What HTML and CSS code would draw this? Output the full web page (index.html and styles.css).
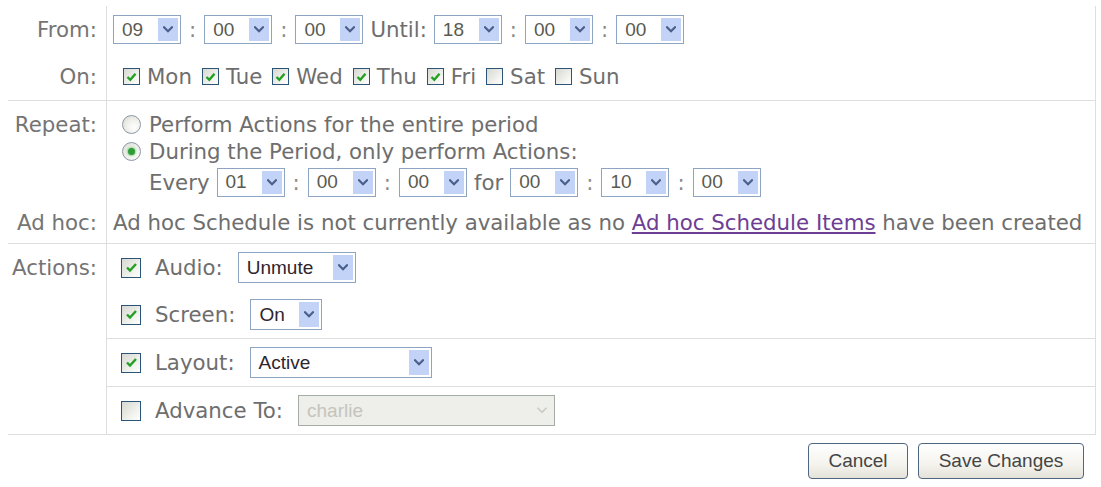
FILE: index.html
```html
<!DOCTYPE html>
<html lang="en">
<head>
<meta charset="utf-8">
<title>Schedule Item</title>
<link rel="stylesheet" href="styles.css">
</head>
<body>
<div class="panel">

  <div class="sec">
    <div class="lbl row-h">From:</div>
    <div class="cell row-h pad-sel">
      <span class="sel tm"><span class="v">09</span><span class="arr"><svg width="10" height="7" viewBox="0 0 10 7"><path d="M1 1.3 L5 5.3 L9 1.3" /></svg></span></span>
      <span class="colon">:</span>
      <span class="sel tm"><span class="v">00</span><span class="arr"><svg width="10" height="7" viewBox="0 0 10 7"><path d="M1 1.3 L5 5.3 L9 1.3" /></svg></span></span>
      <span class="colon">:</span>
      <span class="sel tm"><span class="v">00</span><span class="arr"><svg width="10" height="7" viewBox="0 0 10 7"><path d="M1 1.3 L5 5.3 L9 1.3" /></svg></span></span>
      <span class="word">Until:</span>
      <span class="sel tm"><span class="v">18</span><span class="arr"><svg width="10" height="7" viewBox="0 0 10 7"><path d="M1 1.3 L5 5.3 L9 1.3" /></svg></span></span>
      <span class="colon">:</span>
      <span class="sel tm"><span class="v">00</span><span class="arr"><svg width="10" height="7" viewBox="0 0 10 7"><path d="M1 1.3 L5 5.3 L9 1.3" /></svg></span></span>
      <span class="colon">:</span>
      <span class="sel tm"><span class="v">00</span><span class="arr"><svg width="10" height="7" viewBox="0 0 10 7"><path d="M1 1.3 L5 5.3 L9 1.3" /></svg></span></span>
    </div>

    <div class="lbl row-h">On:</div>
    <div class="cell row-h days">
      <label class="day"><span class="cb on"><svg width="11" height="10" viewBox="0 0 11 10"><path d="M1.5 5 L4.3 7.8 L9.5 1.8" /></svg></span>Mon</label>
      <label class="day"><span class="cb on"><svg width="11" height="10" viewBox="0 0 11 10"><path d="M1.5 5 L4.3 7.8 L9.5 1.8" /></svg></span>Tue</label>
      <label class="day"><span class="cb on"><svg width="11" height="10" viewBox="0 0 11 10"><path d="M1.5 5 L4.3 7.8 L9.5 1.8" /></svg></span>Wed</label>
      <label class="day"><span class="cb on"><svg width="11" height="10" viewBox="0 0 11 10"><path d="M1.5 5 L4.3 7.8 L9.5 1.8" /></svg></span>Thu</label>
      <label class="day"><span class="cb on"><svg width="11" height="10" viewBox="0 0 11 10"><path d="M1.5 5 L4.3 7.8 L9.5 1.8" /></svg></span>Fri</label>
      <label class="day"><span class="cb"></span>Sat</label>
      <label class="day"><span class="cb"></span>Sun</label>
    </div>
  </div>

  <div class="sec">
    <div class="lbl lbl-top">Repeat:</div>
    <div class="cell repeat">
      <div class="opt"><span class="radio"></span>Perform Actions for the entire period</div>
      <div class="opt"><span class="radio on"></span>During the Period, only perform Actions:</div>
      <div class="every">
        <span class="word first">Every</span>
        <span class="sel tm"><span class="v">01</span><span class="arr"><svg width="10" height="7" viewBox="0 0 10 7"><path d="M1 1.3 L5 5.3 L9 1.3" /></svg></span></span>
        <span class="colon">:</span>
        <span class="sel tm"><span class="v">00</span><span class="arr"><svg width="10" height="7" viewBox="0 0 10 7"><path d="M1 1.3 L5 5.3 L9 1.3" /></svg></span></span>
        <span class="colon">:</span>
        <span class="sel tm"><span class="v">00</span><span class="arr"><svg width="10" height="7" viewBox="0 0 10 7"><path d="M1 1.3 L5 5.3 L9 1.3" /></svg></span></span>
        <span class="word">for</span>
        <span class="sel tm"><span class="v">00</span><span class="arr"><svg width="10" height="7" viewBox="0 0 10 7"><path d="M1 1.3 L5 5.3 L9 1.3" /></svg></span></span>
        <span class="colon">:</span>
        <span class="sel tm"><span class="v">10</span><span class="arr"><svg width="10" height="7" viewBox="0 0 10 7"><path d="M1 1.3 L5 5.3 L9 1.3" /></svg></span></span>
        <span class="colon">:</span>
        <span class="sel tm"><span class="v">00</span><span class="arr"><svg width="10" height="7" viewBox="0 0 10 7"><path d="M1 1.3 L5 5.3 L9 1.3" /></svg></span></span>
      </div>
    </div>

    <div class="lbl adhoc-h">Ad hoc:</div>
    <div class="cell adhoc-h adhoc">Ad hoc Schedule is not currently available as no&nbsp;<a href="#" class="link">Ad hoc Schedule Items</a>&nbsp;have been created</div>
  </div>

  <div class="sec">
    <div class="lbl lbl-top actions-lbl">Actions:</div>
    <div class="cell actions">
      <div class="grp">
        <div class="act">
          <span class="cb big on"><svg width="13" height="11" viewBox="0 0 13 11"><path d="M2 5.5 L5 8.5 L11 2" /></svg></span>
          <span class="name">Audio:</span>
          <span class="sel w-unmute"><span class="v dark">Unmute</span><span class="arr"><svg width="10" height="7" viewBox="0 0 10 7"><path d="M1 1.3 L5 5.3 L9 1.3" /></svg></span></span>
        </div>
        <div class="act">
          <span class="cb big on"><svg width="13" height="11" viewBox="0 0 13 11"><path d="M2 5.5 L5 8.5 L11 2" /></svg></span>
          <span class="name">Screen:</span>
          <span class="sel w-on"><span class="v dark">On</span><span class="arr"><svg width="10" height="7" viewBox="0 0 10 7"><path d="M1 1.3 L5 5.3 L9 1.3" /></svg></span></span>
        </div>
      </div>
      <div class="grp">
        <div class="act">
          <span class="cb big on"><svg width="13" height="11" viewBox="0 0 13 11"><path d="M2 5.5 L5 8.5 L11 2" /></svg></span>
          <span class="name">Layout:</span>
          <span class="sel w-layout"><span class="v dark">Active</span><span class="arr"><svg width="10" height="7" viewBox="0 0 10 7"><path d="M1 1.3 L5 5.3 L9 1.3" /></svg></span></span>
        </div>
      </div>
      <div class="grp last">
        <div class="act">
          <span class="cb big"></span>
          <span class="name">Advance To:</span>
          <span class="sel w-adv off"><span class="v">charlie</span><span class="arr"><svg width="10" height="7" viewBox="0 0 10 7"><path d="M1 1.3 L5 5.3 L9 1.3" /></svg></span></span>
        </div>
      </div>
    </div>
  </div>

  <div class="footer">
    <button class="btn btn-cancel" type="button">Cancel</button>
    <button class="btn btn-save" type="button">Save Changes</button>
  </div>

</div>
</body>
</html>
```

FILE: styles.css
```css
html, body {
  margin: 0;
  padding: 0;
  background: #ffffff;
}

body {
  font-family: "DejaVu Sans", Verdana, sans-serif;
  font-size: 21.3px;
  color: #6e6e6e;
}

.panel {
  margin: 6px 0 0 8px;
  width: 1088px;
}

/* each block is a two column grid: label | content */
.sec {
  display: grid;
  grid-template-columns: 99px 1fr;
  border-bottom: 1px solid #dedede;
  border-right: 1px solid #dedede;
}

.lbl {
  border-right: 1px solid #dedede;
  text-align: right;
  padding-right: 9px;
  color: #747474;
  white-space: nowrap;
}

.row-h {
  height: 47px;
  display: flex;
  align-items: center;
}
.lbl.row-h {
  justify-content: flex-end;
}

.cell {
  white-space: nowrap;
}

.pad-sel {
  padding-left: 6px;
}

/* dropdowns */
.sel {
  display: inline-flex;
  align-items: stretch;
  box-sizing: border-box;
  height: 29px;
  border: 1px solid #8da4c2;
  background: #ffffff;
  font-family: "Liberation Sans", Arial, sans-serif;
  font-size: 19px;
  color: #5a5a50;
}
.sel.tm {
  width: 68px;
}
.sel .v {
  flex: 1;
  display: flex;
  align-items: center;
  padding-left: 8px;
}
.sel .v.dark {
  color: #2e2430;
}
.sel .arr {
  width: 20px;
  margin: 2px 2px 2px 0;
  background: #c3d3f7;
  display: flex;
  align-items: center;
  justify-content: center;
}
.sel .arr svg path {
  fill: none;
  stroke: #4a5f8a;
  stroke-width: 2.2;
  stroke-linecap: square;
}

.sel.off {
  background: #eeeeea;
  border-color: #a5aca5;
  color: #c4c4bc;
}
.sel.off .arr {
  background: transparent;
}
.sel.off .arr svg path {
  stroke: #c8c8c0;
  stroke-width: 1.5;
}

.colon {
  margin: 0 8px;
  color: #8a8a8a;
}
.word {
  margin: 0 7px;
}
.word.first {
  margin-left: 0;
}

/* checkboxes */
.cb {
  display: inline-flex;
  align-items: center;
  justify-content: center;
  box-sizing: border-box;
  width: 17px;
  height: 17px;
  border: 1px solid #2a5478;
  background: linear-gradient(135deg, #d8d8d2 0%, #f4f4f0 70%, #ffffff 100%);
  flex: none;
}
.cb svg path {
  fill: none;
  stroke: #22a022;
  stroke-width: 2.4;
}
.cb.big {
  width: 20px;
  height: 20px;
}

.days {
  padding-left: 16px;
}
.day {
  display: inline-flex;
  align-items: center;
  margin-right: 10px;
}
.day .cb {
  margin-right: 7px;
}

/* repeat options */
.repeat {
  padding: 10px 0 3px 15px;
}
.opt {
  height: 27px;
  display: flex;
  align-items: center;
}
.radio {
  box-sizing: border-box;
  width: 19px;
  height: 19px;
  border: 1px solid #8b98a6;
  border-radius: 50%;
  background: radial-gradient(circle at 65% 65%, #ffffff 0%, #f0f0ec 45%, #d9d9d3 100%);
  margin-right: 8px;
  display: flex;
  align-items: center;
  justify-content: center;
  flex: none;
}
.radio.on::after {
  content: "";
  width: 7px;
  height: 7px;
  border-radius: 50%;
  background: #2f9c3a;
  box-shadow: 0 0 2px 1px #8fd58f;
}
.every {
  height: 34px;
  display: flex;
  align-items: center;
  padding-left: 27px;
}

.lbl-top {
  padding-top: 11px;
}

.adhoc-h {
  height: 41px;
  display: flex;
  align-items: center;
}
.lbl.adhoc-h {
  justify-content: flex-end;
}
.adhoc {
  padding-left: 6px;
}
.link {
  color: #6d3e94;
  text-decoration: underline;
}

/* actions list */
.actions-lbl {
  padding-top: 11px;
}
.grp {
  border-bottom: 1px solid #dedede;
}
.grp.last {
  border-bottom: none;
}
.act {
  height: 47px;
  display: flex;
  align-items: center;
  padding-left: 14px;
}
.act .cb {
  margin-right: 14px;
}
.act .name {
  margin-right: 15px;
}
.act .sel {
  height: 31px;
}
.w-unmute { width: 118px; }
.w-on { width: 72px; }
.w-layout { width: 182px; }
.w-adv { width: 257px; }

/* buttons */
.footer {
  display: flex;
  justify-content: flex-end;
  gap: 10px;
  padding: 8px 12px 0 0;
}
.btn {
  height: 36px;
  box-sizing: border-box;
  border: 1px solid #4f6680;
  border-radius: 4px;
  background: linear-gradient(#ffffff 0%, #f4f3ee 60%, #e4e2d9 100%);
  font-family: "Liberation Sans", Arial, sans-serif;
  font-size: 19px;
  color: #454545;
  padding: 0;
}
.btn-cancel { width: 100px; }
.btn-save { width: 166px; }
```
